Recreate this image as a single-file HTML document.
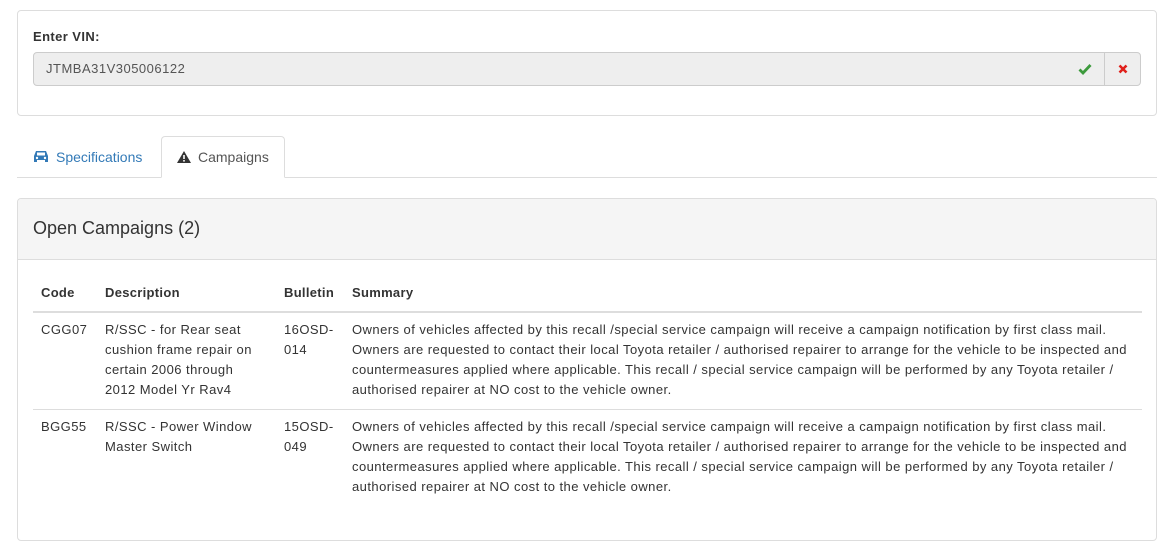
<!DOCTYPE html>
<html><head><style>
*{box-sizing:border-box}
body{margin:0;background:#fff;font-family:"Liberation Sans",Arial,sans-serif;font-size:13px;color:#333;width:1163px;height:546px;overflow:hidden;position:relative}
.s13{letter-spacing:0.45px}
.p1{position:absolute;left:17px;top:10px;width:1140px;height:106px;border:1px solid #ddd;border-radius:4px}
.lbl{position:absolute;left:15px;top:18px;font-weight:bold;font-size:13px;letter-spacing:0.4px}
.inp{position:absolute;left:15px;top:41px;width:1072px;height:34px;background:#eee;border:1px solid #ccc;border-radius:4px 0 0 4px;padding:8px 12px;color:#555;font-size:13px;line-height:16px;letter-spacing:0.5px}
.chk{position:absolute;right:12px;top:10px}
.btn{position:absolute;left:1086px;top:41px;width:37px;height:34px;background:#eee;border:1px solid #ccc;border-radius:0 4px 4px 0}
.tabs{position:absolute;left:17px;top:177px;width:1140px;border-top:1px solid #ddd}
.t1{position:absolute;left:33px;top:149px;color:#337ab7;font-size:14px}
.t2{position:absolute;left:161px;top:136px;width:124px;height:42px;border:1px solid #ddd;border-bottom:1px solid #fff;border-radius:4px 4px 0 0;background:#fff;font-size:14px;color:#555;padding:12px 0 0 15px}
.p2{position:absolute;left:17px;top:198px;width:1140px;height:343px;border:1px solid #ddd;border-radius:4px;overflow:hidden}
.hd{height:61px;background:#f5f5f5;border-bottom:1px solid #ddd;padding:19px 15px;font-size:18px;color:#333}
table{position:absolute;left:15px;top:82px;width:1109px;border-collapse:collapse;font-size:13px;letter-spacing:0.45px}
th{text-align:left;padding:2px 8px 8px;border-bottom:2px solid #ddd;line-height:20px;letter-spacing:0.3px}
td{vertical-align:top;padding:7px 8px 9px;line-height:20px;border-bottom:1px solid #ddd}
tr:last-child td{border-bottom:none}
</style></head><body>
<div class="p1"><div class="lbl">Enter VIN:</div>
<div class="inp">JTMBA31V305006122<svg class="chk" width="14" height="12" viewBox="0 0 14 12"><path d="M1.5 6.5L5 10L12.5 2" stroke="#3c9a3c" stroke-width="2.8" fill="none"/></svg></div>
<div class="btn"><svg width="10" height="10" viewBox="0 0 10 10" style="position:absolute;left:13px;top:11px"><path d="M1.5 1.5L8.5 8.5M8.5 1.5L1.5 8.5" stroke="#e0201b" stroke-width="2.6"/></svg></div>
</div>
<div class="tabs"></div>
<div class="t1"><svg width="16" height="13" viewBox="0 0 16 13" style="vertical-align:-1px;margin-right:7px"><path d="M3 1h10l2 5v6h-3v-2H4v2H1V6z" fill="#337ab7"/><rect x="4" y="2.5" width="8" height="3" fill="#fff"/><circle cx="4" cy="8" r="1.2" fill="#fff"/><circle cx="12" cy="8" r="1.2" fill="#fff"/></svg>Specifications</div>
<div class="t2"><svg width="14" height="12" viewBox="0 0 14 12" style="vertical-align:-1px;margin-right:7px"><path d="M7 0L14 12H0z" fill="#333"/><rect x="6.2" y="4" width="1.6" height="4" fill="#fff"/><rect x="6.2" y="9" width="1.6" height="1.6" fill="#fff"/></svg>Campaigns</div>
<div class="p2"><div class="hd">Open Campaigns (2)</div>
<table>
<tr><th style="width:64px">Code</th><th style="width:179px">Description</th><th style="width:68px">Bulletin</th><th>Summary</th></tr>
<tr><td>CGG07</td><td>R/SSC - for Rear seat cushion frame repair on certain 2006 through 2012 Model Yr Rav4</td><td>16OSD-014</td><td>Owners of vehicles affected by this recall /special service campaign will receive a campaign notification by first class mail. Owners are requested to contact their local Toyota retailer / authorised repairer to arrange for the vehicle to be inspected and countermeasures applied where applicable. This recall / special service campaign will be performed by any Toyota retailer / authorised repairer at NO cost to the vehicle owner.</td></tr>
<tr><td>BGG55</td><td>R/SSC - Power Window Master Switch</td><td>15OSD-049</td><td>Owners of vehicles affected by this recall /special service campaign will receive a campaign notification by first class mail. Owners are requested to contact their local Toyota retailer / authorised repairer to arrange for the vehicle to be inspected and countermeasures applied where applicable. This recall / special service campaign will be performed by any Toyota retailer / authorised repairer at NO cost to the vehicle owner.</td></tr>
</table></div>
</body></html>
